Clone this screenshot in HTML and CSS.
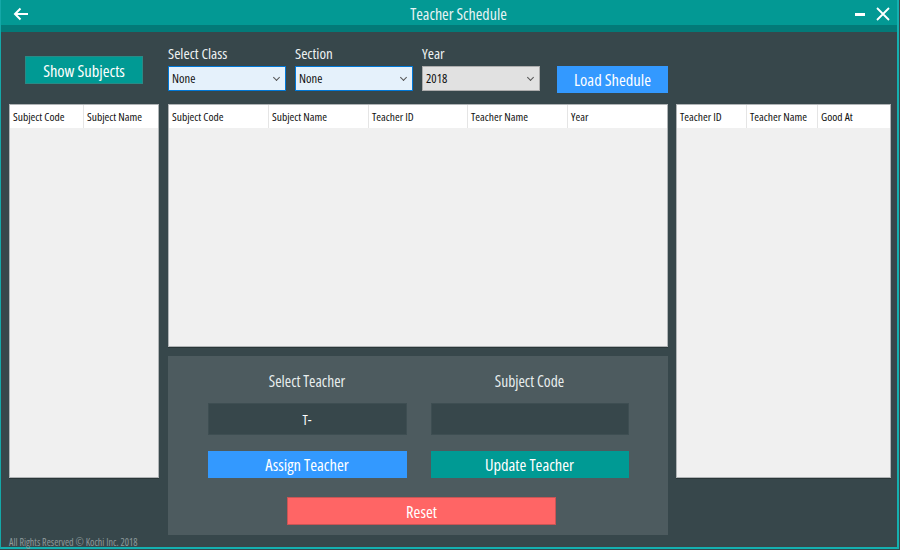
FILE: index.html
```html
<!DOCTYPE html>
<html>
<head>
<meta charset="utf-8">
<link rel="stylesheet" href="styles.css">
</head>
<body>
<div class="window">
  <div class="titlebar">
    <span class="back">
      <svg width="16" height="14" viewBox="0 0 16 14"><path d="M15 7H2M7.5 1.5L2 7l5.5 5.5" fill="none" stroke="#fff" stroke-width="2"/></svg>
    </span>
    <span class="title">Teacher Schedule</span>
    <span class="winctl">
      <svg width="12" height="12" viewBox="0 0 12 12"><path d="M1 6.5h10" stroke="#fff" stroke-width="3"/></svg>
      <svg width="14" height="14" viewBox="0 0 14 14"><path d="M1 1l12 12M13 1L1 13" stroke="#fff" stroke-width="1.8"/></svg>
    </span>
  </div>
  <div class="strip"></div>
  <div class="content">
    <div class="leftTop">
      <button class="btn teal showBtn">Show Subjects</button>
    </div>
    <div class="filters">
      <div class="field">
        <label>Select Class</label>
        <div class="select active"><span>None</span><i class="chev"></i></div>
      </div>
      <div class="field">
        <label>Section</label>
        <div class="select active"><span>None</span><i class="chev"></i></div>
      </div>
      <div class="field">
        <label>Year</label>
        <div class="select gray"><span>2018</span><i class="chev"></i></div>
      </div>
      <button class="btn blue loadBtn">Load Shedule</button>
    </div>
    <div class="rightTop"></div>

    <div class="table leftTable">
      <div class="thead">
        <div class="th w74">Subject Code</div>
        <div class="th grow">Subject Name</div>
      </div>
    </div>

    <div class="midCol">
      <div class="table midTable">
        <div class="thead">
          <div class="th w100">Subject Code</div>
          <div class="th w100">Subject Name</div>
          <div class="th w99">Teacher ID</div>
          <div class="th w100">Teacher Name</div>
          <div class="th grow">Year</div>
        </div>
      </div>
      <div class="panel">
        <div class="pgrid">
          <div class="plabel">Select Teacher</div>
          <div class="plabel">Subject Code</div>
          <div class="pinput">T-</div>
          <div class="pinput"></div>
          <button class="btn blue pbtn">Assign Teacher</button>
          <button class="btn teal pbtn">Update Teacher</button>
        </div>
        <button class="btn red resetBtn">Reset</button>
      </div>
    </div>

    <div class="table rightTable">
      <div class="thead">
        <div class="th w70">Teacher ID</div>
        <div class="th w71">Teacher Name</div>
        <div class="th grow">Good At</div>
      </div>
    </div>
  </div>
  <div class="footer">All Rights Reserved © Kochi Inc. 2018</div>
</div>
</body>
</html>
```
FILE: styles.css
```css
* { box-sizing: border-box; }
html, body { margin: 0; padding: 0; background: #37474b; }
body {
  font-family: "Open Sans", "DejaVu Sans Condensed", sans-serif;
  font-stretch: 75%;
  font-weight: 400;
  width: 900px; height: 550px; overflow: hidden;
}
.window {
  width: 899px; height: 549px;
  background: #37474b;
  border-left: 1px solid #14a8a8;
  border-right: 2px solid #14b0b0;
  border-bottom: 2px solid #14b0b0;
  display: flex; flex-direction: column;
}
.titlebar {
  height: 25px; flex: none; background: #039994;
  display: flex; align-items: center;
  color: #e8f4f4; padding-top: 3px;
}
.back { padding-left: 12px; display: flex; }
.title {
  flex: 1; text-align: center; font-size: 16px;
  padding-left: 34px;
}
.winctl { display: flex; align-items: center; gap: 10px; padding-right: 7px; }
.strip { height: 7px; flex: none; background: #037a78; }

.content {
  flex: 1;
  display: grid;
  grid-template-columns: 150px 500px 214px;
  grid-template-rows: 72px 1fr;
  column-gap: 9px;
  padding-left: 8px;
}
.leftTop { padding: 24px 0 0 16px; }
.btn {
  border: none; color: #fff; font-family: inherit; font-stretch: 75%; font-weight: 400;
  font-size: 16.5px; padding: 0; cursor: pointer;
}
.teal { background: #009a94; }
.blue { background: #3399ff; }
.red { background: #ff6565; }
.showBtn { width: 118px; height: 28px; border: 1px solid #2a8a86; }

.filters { display: flex; gap: 9px; align-items: flex-start; padding-top: 11px; }
.field { width: 118px; display: flex; flex-direction: column; }
.field label { font-size: 15px; height: 23px; color: #eef2f2; }
.select {
  height: 25px; display: flex; align-items: center; justify-content: space-between;
  padding: 0 6px 0 3px; font-size: 12.5px; color: #111;
}
.select.active { background: #e5f1fb; border: 1px solid #0078d7; }
.select.gray { background: #e1e1e1; border: 1px solid #adadad; }
.chev {
  width: 5px; height: 5px; border-right: 1px solid #555; border-bottom: 1px solid #555;
  transform: rotate(45deg); margin-top: -3px;
}
.loadBtn { width: 111px; height: 27px; margin-top: 23px; margin-left: 8px; }

.table {
  background: #f0f0f0; border: 1px solid #b0b4b6;
  box-shadow: 0 1px 0 #2a3638;
}
.thead { display: flex; height: 23px; background: #fff; }
.th {
  font-size: 11.5px; color: #111;
  padding: 4px 0 0 3px; border-right: 1px solid #e5e5e5; white-space: nowrap; overflow: hidden;
}
.th.grow { flex: 1; border-right: none; }
.w74 { width: 74px; } .w100 { width: 100px; } .w99 { width: 99px; }
.w70 { width: 70px; } .w71 { width: 71px; }
.leftTable { height: 374px; }
.rightTable { height: 374px; margin-left: -1px; }
.midCol { display: flex; flex-direction: column; gap: 9px; }
.midTable { height: 243px; }
.panel {
  height: 179px; background: #4d5b5f;
  display: flex; flex-direction: column; align-items: center;
  padding-top: 15px;
}
.pgrid {
  display: grid; grid-template-columns: 199px 198px; column-gap: 24px;
  grid-template-rows: 32px 32px 43px;
}
.plabel { color: #e8eeee; font-size: 15.5px; text-align: center; line-height: 20px; }
.pinput {
  background: #37474b; border: 1px solid #3e4e52; color: #fff; font-size: 14px;
  display: flex; align-items: center; justify-content: center;
}
.pbtn { margin-top: 16px; height: 27px; }
.resetBtn { width: 269px; height: 28px; margin-top: 19px; margin-left: 7px; border: 1px solid #c95555; }

.footer {
  height: 16px; font-size: 10px; color: #8e9a9b; padding-left: 8px;
}
```
